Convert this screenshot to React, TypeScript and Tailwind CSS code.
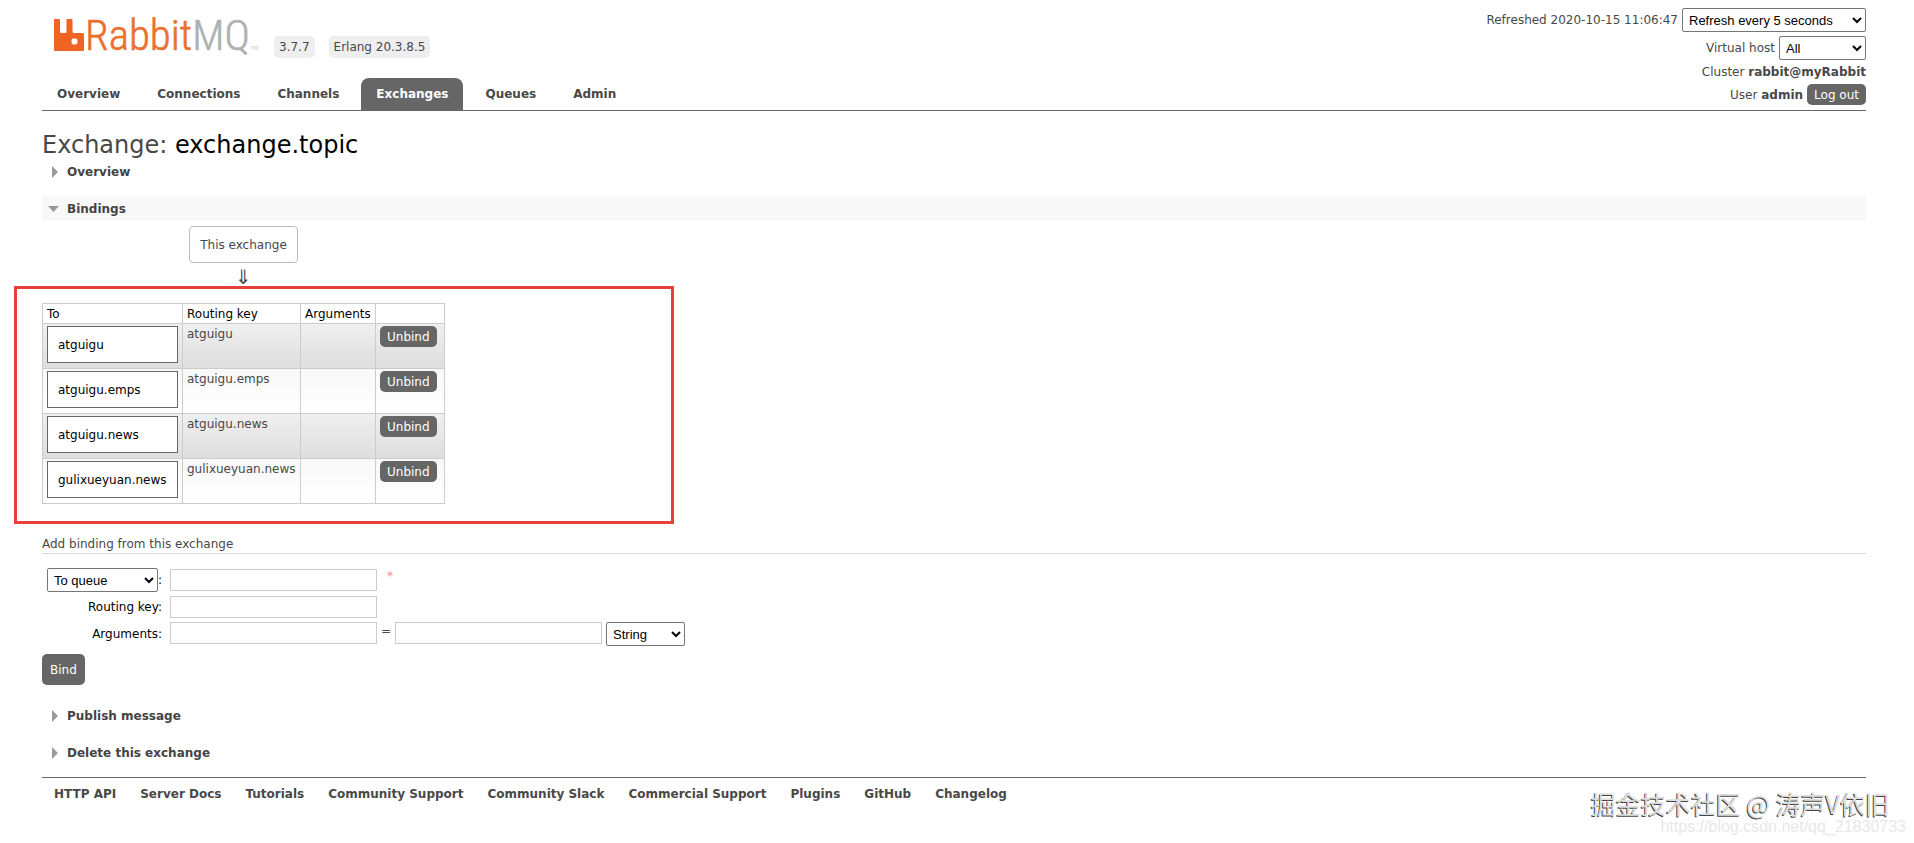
import React from "react";

const tabs = ["Overview", "Connections", "Channels", "Exchanges", "Queues", "Admin"];

const bindings = ["atguigu", "atguigu.emps", "atguigu.news", "gulixueyuan.news"];

const footerLinks = [
  "HTTP API",
  "Server Docs",
  "Tutorials",
  "Community Support",
  "Community Slack",
  "Commercial Support",
  "Plugins",
  "GitHub",
  "Changelog",
];

const selectClass =
  "h-6 rounded-xs border border-[#767676] bg-white px-[2px] font-['Liberation_Sans',Arial,sans-serif] text-[13px] text-black";
const inputClass = "h-[22px] w-[207px] border border-[#cccccc] bg-white px-1 text-xs text-black";
const smallButton = "h-[21px] rounded-[5px] bg-[#666666] px-[7px] text-xs leading-none text-white";

function Logo() {
  return (
    <svg className="overflow-visible" width="206" height="42" viewBox="0 0 206 42" role="img" aria-label="RabbitMQ">
      <path
        fill="#f06423"
        d="M1 3h4q1 0 1 1v11.500q0 1.500 1.500 1.500h3.500q1.500 0 1.500-1.500V4q0-1 1-1h4q1 0 1 1v11.500q0 1.500 1.500 1.500h8.500q1.500 0 1.500 1.500v15.500q0 1-1 1H1q-1 0-1-1V4q0-1 1-1zM19.500 22.500q-2 0-2 2v2q0 2 2 2h2q2 0 2-2v-2q0-2-2-2z"
        fillRule="evenodd"
      />
      <g fontFamily="'Roboto Condensed Light', Roboto, sans-serif" fontSize="43" strokeWidth="0.6">
        <text x="31" y="34">
          <tspan fill="#ea702f" stroke="#ea702f">
            Rabbit
          </tspan>
          <tspan fill="#aeb2b0" stroke="#aeb2b0">
            MQ
          </tspan>
        </text>
      </g>
      <text x="197" y="34" fontSize="5" fill="#c4c6c5" fontFamily="'Liberation Sans', sans-serif">
        TM
      </text>
    </svg>
  );
}

function SectionHeading({ title, open = false }: { title: string; open?: boolean }) {
  return (
    <h2 className={open ? "bg-[#f8f8f8]" : ""}>
      <button
        type="button"
        aria-expanded={open}
        className="flex h-[25px] w-full items-center gap-2 pl-[6px] text-left text-xs font-bold text-[#444444]"
      >
        <svg width="11" height="12" viewBox="0 0 11 12" aria-hidden="true">
          {open ? <path d="M0 3h11L5.500 9z" fill="#999" /> : <path d="M4 0v12l6-6z" fill="#999" />}
        </svg>
        {title}
      </button>
    </h2>
  );
}

export default function App() {
  return (
    <div className="relative min-h-screen bg-white pr-12 pl-[42px] font-['DejaVu_Sans',Verdana,sans-serif] text-xs leading-4 text-[#484848]">
      <header className="flex items-end justify-between border-b border-[#666666]">
        <div>
          <div className="flex items-end gap-[14px] pl-3">
            <Logo />
            <span className="rounded-[5px] bg-[#eeeeee] px-[5px] py-[3px]">3.7.7</span>
            <span className="rounded-[5px] bg-[#eeeeee] px-[5px] py-[3px]">Erlang 20.3.8.5</span>
          </div>
          <nav className="mt-5 flex gap-[7px]">
            {tabs.map((tab) => (
              <a
                key={tab}
                href="#"
                aria-current={tab === "Exchanges" ? "page" : undefined}
                className={
                  tab === "Exchanges"
                    ? "rounded-t-lg bg-[#666666] px-[15px] py-2 font-bold text-white"
                    : "px-[15px] py-2 font-bold"
                }
              >
                {tab}
              </a>
            ))}
          </nav>
        </div>
        <div className="flex flex-col items-end pt-2 pb-[5px]">
          <div className="flex items-center gap-1">
            <label htmlFor="refresh">Refreshed 2020-10-15 11:06:47</label>
            <select id="refresh" className={`${selectClass} w-[184px]`}>
              <option>Refresh every 5 seconds</option>
            </select>
          </div>
          <div className="mt-1 flex items-center gap-1">
            <label htmlFor="vhost">Virtual host</label>
            <select id="vhost" className={`${selectClass} w-[87px]`}>
              <option>All</option>
            </select>
          </div>
          <p className="mt-1">
            Cluster <b>rabbit@myRabbit</b>
          </p>
          <p className="mt-1 flex items-center gap-1">
            <span>
              User <b>admin</b>
            </span>
            <button type="button" className={smallButton}>
              Log out
            </button>
          </p>
        </div>
      </header>

      <main>
        <h1 className="mt-5 text-2xl leading-7">
          Exchange: <span className="text-black">exchange.topic</span>
        </h1>
        <SectionHeading title="Overview" />
        <div className="mt-3">
          <SectionHeading title="Bindings" open />
        </div>

        <div className="relative mt-[5px] w-fit">
          <div className="flex flex-col items-center">
            <span className="flex h-[37px] items-center rounded-[4px] border border-[#bbbbbb] px-[10px]">
              This exchange
            </span>
            <span className="mt-1 text-xl leading-5">⇓</span>
          </div>
          <table className="mt-4 w-[403px] border-collapse text-left">
            <thead>
              <tr className="h-5 text-black">
                <th className="w-[140px] border border-[#cccccc] px-1 py-0 font-normal">To</th>
                <th className="w-[118px] border border-[#cccccc] px-1 py-0 font-normal">Routing key</th>
                <th className="w-[75px] border border-[#cccccc] px-1 py-0 font-normal">Arguments</th>
                <th className="border border-[#cccccc] p-0" aria-label="Actions" />
              </tr>
            </thead>
            <tbody>
              {bindings.map((name, i) => (
                <tr
                  key={name}
                  className={
                    i % 2 === 0
                      ? "h-[45px] bg-linear-to-b from-[#f0f0f0] to-[#dddddd] align-top"
                      : "h-[45px] bg-linear-to-b from-[#f8f8f8] to-white align-top"
                  }
                >
                  <td className="border border-[#cccccc] px-1 pt-[2px] pb-0">
                    <a
                      href="#"
                      className="flex h-[37px] items-center border border-[#666666] bg-white px-[10px] text-black"
                    >
                      {name}
                    </a>
                  </td>
                  <td className="border border-[#cccccc] px-1 pt-[2px] pb-0">{name}</td>
                  <td className="border border-[#cccccc]" />
                  <td className="border border-[#cccccc] px-1 pt-[2px] pb-0">
                    <button type="button" className={smallButton}>
                      Unbind
                    </button>
                  </td>
                </tr>
              ))}
            </tbody>
          </table>
          <div className="pointer-events-none absolute top-[60px] -left-7 h-[238px] w-[660px] border-3 border-[#e83f3c]" />
        </div>

        <h3 className="mt-8 border-b border-[#dddddd] pb-px">Add binding from this exchange</h3>

        <form className="mt-[14px]">
          <div className="grid grid-cols-[120px_auto] justify-start gap-x-2 gap-y-1 text-black">
            <div className="flex h-6 items-center justify-end">
              <select aria-label="Destination type" className={`${selectClass} w-[111px]`}>
                <option>To queue</option>
              </select>
              :
            </div>
            <div className="flex items-center gap-[10px]">
              <input aria-label="Destination" className={inputClass} />
              <span className="self-start text-[#ff8888]">*</span>
            </div>
            <label htmlFor="routing" className="self-center text-right">
              Routing key:
            </label>
            <input id="routing" className={inputClass} />
            <label htmlFor="argument" className="self-center text-right">
              Arguments:
            </label>
            <div className="flex items-start gap-1">
              <input id="argument" className={inputClass} />
              <span className="pt-px text-[#484848]">=</span>
              <input aria-label="Argument value" className={inputClass} />
              <select aria-label="Argument type" className={`${selectClass} w-[79px]`}>
                <option>String</option>
              </select>
            </div>
          </div>
          <button type="button" className="mt-2 h-[31px] rounded-[5px] bg-[#666666] px-2 text-xs text-white">
            Bind
          </button>
        </form>

        <div className="mt-[18px]">
          <SectionHeading title="Publish message" />
        </div>
        <div className="mt-3">
          <SectionHeading title="Delete this exchange" />
        </div>
      </main>

      <footer className="mt-3 flex gap-6 border-t border-[#666666] px-3 pt-2">
        {footerLinks.map((link) => (
          <a key={link} href="#" className="font-bold">
            {link}
          </a>
        ))}
      </footer>

      <p className="absolute right-2 bottom-[6px] font-['Liberation_Sans',sans-serif] text-base leading-5 text-[#e8e8e8]">
        https://blog.csdn.net/qq_21830733
      </p>
      <p className="absolute right-6 bottom-6 font-['Noto_Sans_CJK_SC',sans-serif] text-[25px] leading-8 text-[#dddddd] [text-shadow:-1px_1px_0_#444444]">
        掘金技术社区 @ 涛声V依旧
      </p>
    </div>
  );
}
